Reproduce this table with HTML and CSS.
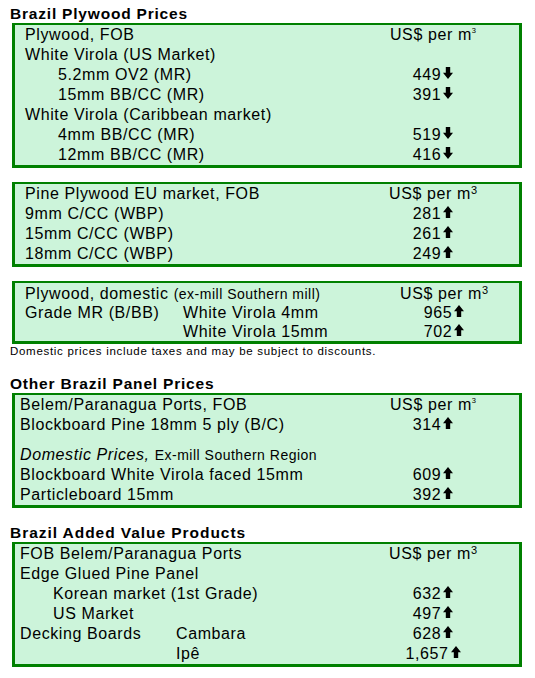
FILE: index.html
```html
<!DOCTYPE html>
<html>
<head>
<meta charset="utf-8">
<title>Brazil Plywood Prices</title>
<link rel="stylesheet" href="styles.css">
</head>
<body>
<div class="page">

  <h2 class="title">Brazil Plywood Prices</h2>
  <div class="box box-std">
    <div class="lbl">Plywood, FOB</div>
    <div class="val">US$ per m<sup class="sup-s">3</sup></div>
    <div class="lbl">White Virola (US Market)</div>
    <div class="val"></div>
    <div class="lbl ind">5.2mm OV2 (MR)</div>
    <div class="val">449<svg class="arr" viewBox="0 0 10 12"><path d="M2.8 0H7.2V5.8H10L5 12L0 5.8H2.8Z"/></svg></div>
    <div class="lbl ind">15mm BB/CC (MR)</div>
    <div class="val">391<svg class="arr" viewBox="0 0 10 12"><path d="M2.8 0H7.2V5.8H10L5 12L0 5.8H2.8Z"/></svg></div>
    <div class="lbl">White Virola (Caribbean market)</div>
    <div class="val"></div>
    <div class="lbl ind">4mm BB/CC (MR)</div>
    <div class="val">519<svg class="arr" viewBox="0 0 10 12"><path d="M2.8 0H7.2V5.8H10L5 12L0 5.8H2.8Z"/></svg></div>
    <div class="lbl ind">12mm BB/CC (MR)</div>
    <div class="val">416<svg class="arr" viewBox="0 0 10 12"><path d="M2.8 0H7.2V5.8H10L5 12L0 5.8H2.8Z"/></svg></div>
  </div>

  <div class="box box-std box-next">
    <div class="lbl">Pine Plywood EU market, FOB</div>
    <div class="val">US$ per m<sup class="sup-l">3</sup></div>
    <div class="lbl">9mm C/CC (WBP)</div>
    <div class="val">281<svg class="arr" viewBox="0 0 10 12"><path d="M5 0L10 6.2H7.2V12H2.8V6.2H0Z"/></svg></div>
    <div class="lbl">15mm C/CC (WBP)</div>
    <div class="val">261<svg class="arr" viewBox="0 0 10 12"><path d="M5 0L10 6.2H7.2V12H2.8V6.2H0Z"/></svg></div>
    <div class="lbl">18mm C/CC (WBP)</div>
    <div class="val">249<svg class="arr" viewBox="0 0 10 12"><path d="M5 0L10 6.2H7.2V12H2.8V6.2H0Z"/></svg></div>
  </div>

  <div class="box box-dom box-next">
    <div class="lbl span2">Plywood, domestic <span class="small">(ex-mill Southern mill)</span></div>
    <div class="val">US$ per m<sup class="sup-l">3</sup></div>
    <div class="lbl">Grade MR (B/BB)</div>
    <div class="lbl">White Virola 4mm</div>
    <div class="val">965<svg class="arr" viewBox="0 0 10 12"><path d="M5 0L10 6.2H7.2V12H2.8V6.2H0Z"/></svg></div>
    <div class="lbl"></div>
    <div class="lbl">White Virola 15mm</div>
    <div class="val">702<svg class="arr" viewBox="0 0 10 12"><path d="M5 0L10 6.2H7.2V12H2.8V6.2H0Z"/></svg></div>
  </div>
  <p class="note">Domestic prices include taxes and may be subject to discounts.</p>

  <h2 class="title title-2">Other Brazil Panel Prices</h2>
  <div class="box box-panel">
    <div class="lbl">Belem/Paranagua Ports, FOB</div>
    <div class="val">US$ per m<sup class="sup-s">3</sup></div>
    <div class="lbl">Blockboard Pine 18mm 5 ply (B/C)</div>
    <div class="val">314<svg class="arr" viewBox="0 0 10 12"><path d="M5 0L10 6.2H7.2V12H2.8V6.2H0Z"/></svg></div>
    <div class="spacer"></div>
    <div class="lbl span-all"><em>Domestic Prices,</em> <span class="small">Ex-mill Southern Region</span></div>
    <div class="lbl">Blockboard White Virola faced 15mm</div>
    <div class="val">609<svg class="arr" viewBox="0 0 10 12"><path d="M5 0L10 6.2H7.2V12H2.8V6.2H0Z"/></svg></div>
    <div class="lbl">Particleboard 15mm</div>
    <div class="val">392<svg class="arr" viewBox="0 0 10 12"><path d="M5 0L10 6.2H7.2V12H2.8V6.2H0Z"/></svg></div>
  </div>

  <h2 class="title title-3">Brazil Added Value Products</h2>
  <div class="box box-value">
    <div class="lbl span2">FOB Belem/Paranagua Ports</div>
    <div class="val">US$ per m<sup class="sup-l">3</sup></div>
    <div class="lbl span2">Edge Glued Pine Panel</div>
    <div class="val"></div>
    <div class="lbl span2 ind">Korean market (1st Grade)</div>
    <div class="val">632<svg class="arr" viewBox="0 0 10 12"><path d="M5 0L10 6.2H7.2V12H2.8V6.2H0Z"/></svg></div>
    <div class="lbl span2 ind">US Market</div>
    <div class="val">497<svg class="arr" viewBox="0 0 10 12"><path d="M5 0L10 6.2H7.2V12H2.8V6.2H0Z"/></svg></div>
    <div class="lbl">Decking Boards</div>
    <div class="lbl">Cambara</div>
    <div class="val">628<svg class="arr" viewBox="0 0 10 12"><path d="M5 0L10 6.2H7.2V12H2.8V6.2H0Z"/></svg></div>
    <div class="lbl"></div>
    <div class="lbl">Ipê</div>
    <div class="val">1,657<svg class="arr" viewBox="0 0 10 12"><path d="M5 0L10 6.2H7.2V12H2.8V6.2H0Z"/></svg></div>
  </div>

</div>
</body>
</html>
```

FILE: styles.css
```css
html, body {
  margin: 0;
  padding: 0;
  background: #ffffff;
}

body {
  font-family: "Liberation Sans", Arial, sans-serif;
  color: #000000;
}

.page {
  padding: 5px 0 0 10px;
}

.title {
  margin: 0;
  font-size: 15.5px;
  font-weight: bold;
  line-height: 18px;
  letter-spacing: 0.8px;
}

.title-2 {
  margin-top: 17px;
}

.title-3 {
  margin-top: 16px;
  letter-spacing: 0.95px;
}

.box {
  margin-left: 2px;
  width: 510px;
  box-sizing: border-box;
  background: #ccf4da;
  border: 3px solid #008000;
  border-top-width: 2px;
  display: grid;
  grid-auto-rows: 20px;
  font-size: 16px;
  line-height: 20px;
  letter-spacing: 0.6px;
}

.box-next {
  margin-top: 14px;
}

.box-std {
  grid-template-columns: 1fr 130px;
  padding: 0 21px 0 10px;
}

.box-dom {
  grid-template-columns: 158px 1fr 130px;
  grid-auto-rows: 19px;
  line-height: 19px;
  padding: 1px 10px 0 10px;
}

.box-panel {
  grid-template-columns: 1fr 130px;
  grid-template-rows: 20px 20px 10px 20px 20px 20px;
  padding: 0 21px 0 5px;
}

.box-value {
  grid-template-columns: 156px 1fr 130px;
  padding: 0 21px 0 5px;
}

.lbl {
  white-space: nowrap;
}

.ind {
  padding-left: 33px;
}

.span2 {
  grid-column: span 2;
}

.span-all {
  grid-column: 1 / -1;
}

.spacer {
  grid-column: 1 / -1;
}

.val {
  text-align: center;
  white-space: nowrap;
}

.small {
  font-size: 14px;
  letter-spacing: 0.5px;
}

.sup-s {
  font-size: 7.5px;
  line-height: 0;
  vertical-align: 7px;
  letter-spacing: 0;
}

.sup-l {
  font-size: 11px;
  line-height: 0;
  vertical-align: 5px;
  letter-spacing: 0;
}

.arr {
  width: 10px;
  height: 12px;
  margin-left: 2px;
  vertical-align: 1.5px;
  fill: #000000;
}

.note {
  margin: 1px 0 0 0;
  font-size: 11.5px;
  line-height: 13px;
  letter-spacing: 0.7px;
}
```
